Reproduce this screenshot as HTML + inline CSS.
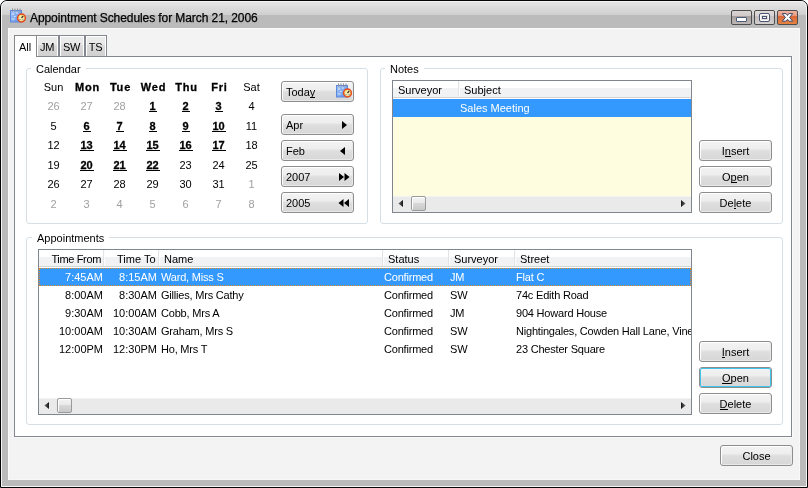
<!DOCTYPE html>
<html><head><meta charset="utf-8">
<style>
.t,.btn,.d,.lbl,.txt{filter:grayscale(1)}
*{margin:0;padding:0;box-sizing:border-box}
html,body{width:808px;height:488px;overflow:hidden;background:#fff}
body{position:relative;font-family:"Liberation Sans",sans-serif;font-size:11px;color:#000}
.a{position:absolute}
.t{position:absolute;white-space:nowrap;line-height:13px;font-size:11px}
#win{left:0;top:0;width:808px;height:488px;border:1px solid #050505;border-radius:7px 7px 0 0;background:linear-gradient(#f6f6f6 0,#f6f6f6 1px,#e6e6e6 1px,#cfcfcf 14px,#bbbbbb 14px,#bbbbbb 100%);overflow:hidden}
#win .hl{left:0;top:0;right:0;bottom:0;border:1px solid #f4f4f4;border-radius:6px 6px 0 0}
#tb{left:1px;top:1px;width:804px;height:13px;background:linear-gradient(#e6e6e6,#cdcdcd)}
#client{left:8px;top:28px;width:792px;height:452px;background:#f3f3f3;border-top:1px solid #fbfbfb;border-left:1px solid #fbfbfb;border-right:1px solid #f8f8f8;border-bottom:1px solid #f8f8f8}
.btn{position:absolute;width:73px;height:21px;border:1px solid #8d8d8d;border-radius:3px;background:linear-gradient(#f3f3f3 0,#eeeeee 40%,#dedede 52%,#d7d7d7 100%);box-shadow:inset 1px 1px 0 #fff, inset -1px -1px 0 #e9e9e9;font-size:11px;line-height:21px;text-align:center}
.btn u{text-decoration:none;position:relative}
.btn u::after{content:"";position:absolute;left:0;right:0;bottom:0px;height:1px;background:#000}
.grp{position:absolute;border:1px solid #d5dfe5;border-radius:3px}
.grp .lbl{position:absolute;top:-8px;background:#fff;padding:0 5px;line-height:13px;white-space:nowrap}
.tab{position:absolute;top:35px;height:22px;border:1px solid #828790;border-bottom:none;background:linear-gradient(#ebebeb 0,#e9e9e9 40%,#dadada 45%,#d0d0d0 100%);box-shadow:inset 1px 1px 0 #fff,inset -1px 0 0 #fff;line-height:22px;text-align:center}
.list{position:absolute;background:#fff;border:1px solid #80858e;overflow:hidden}
.hdr{position:absolute;left:0;top:0;height:17px;right:0;background:linear-gradient(#fff 0,#fff 7px,#f1f2f4 7px,#f1f2f4 100%);border-bottom:1px solid #d5d5d5;box-shadow:0 1px 0 #fff}
.sep{position:absolute;top:0;width:2px;height:16px;background:linear-gradient(to right,#e3e3e5 50%,#fcfcfc 50%)}
.sb{position:absolute;left:0;right:0;bottom:0;height:16px;background:#eaeaea;border-top:1px solid #f3f3f3}
.thumb{position:absolute;top:-1px;width:15px;height:15px;border:1px solid #9a9a9a;border-radius:2px;background:linear-gradient(#f2f2f2 0,#ebebeb 42%,#d8d8d8 50%,#c9c9c9 100%);box-shadow:inset 1px 1px 0 #fff}
.row{position:absolute;left:0;right:0;height:18px}
.sel{background:#3399ff;color:#fff}
.g{color:#a0a0a0}
.d{position:absolute;width:33px;text-align:center;line-height:13px;white-space:nowrap}
.b{font-weight:bold}
.b span{display:inline-block;position:relative}
.b span::after{content:"";position:absolute;left:0;right:-1px;top:11px;height:1px;background:#000}
.hb{font-weight:bold;letter-spacing:0.8px;text-indent:2px;-webkit-text-stroke:0.3px #000}
.b{-webkit-text-stroke:0.3px #000}
</style></head><body>
<div id="win" class="a">
  <div class="a hl"></div>
</div>

<!-- title icon -->
<svg class="a" style="left:10px;top:7px" width="17" height="17" viewBox="0 0 17 17">
  <defs><linearGradient id="pga" x1="0" y1="0" x2="1" y2="1"><stop offset="0" stop-color="#a9c8f6"/><stop offset="1" stop-color="#5d8fe6"/></linearGradient>
  <radialGradient id="cga"><stop offset="0" stop-color="#fbf7d0"/><stop offset="1" stop-color="#f0d870"/></radialGradient></defs>
  <rect x="0.5" y="3.5" width="11" height="11.5" fill="url(#pga)" stroke="#5c88dc" stroke-width="1"/>
  <path d="M2 7 h2 M4 9.5 h1.5 M1.8 12 h3 M6 6 h2" stroke="#eef4ff" stroke-width="1.2" opacity="0.8"/>
  <path d="M2.5 1.5 v3 M5 1.5 v3 M7.5 1.5 v3 M10 1.5 v3" stroke="#8a8f99" stroke-width="1"/>
  <circle cx="11.5" cy="11" r="3.9" fill="url(#cga)" stroke="#e4481c" stroke-width="1.5"/>
  <path d="M11.5 11 L13.2 9" stroke="#403020" stroke-width="1.2"/>
  <circle cx="10" cy="12.5" r="0.6" fill="#4a6ad0"/><circle cx="13" cy="12.8" r="0.6" fill="#4a6ad0"/>
</svg>
<div class="t" style="left:30px;top:11px;font-size:12px;line-height:14px;color:#000;letter-spacing:-0.08px;-webkit-text-stroke:0.25px #000">Appointment Schedules for March 21, 2006</div>

<!-- caption buttons -->
<div class="a" style="left:731px;top:10px;width:21px;height:15px;border:1px solid #4d4d4d;border-radius:2px;background:linear-gradient(#dad5d4 0,#d0cbca 36%,#a39d9c 38%,#bdb8b7 100%)">
  <div class="a" style="left:4px;top:6px;width:11px;height:5px;background:#fff;border:1px solid #4a5a78;border-radius:1px"></div>
</div>
<div class="a" style="left:754px;top:10px;width:21px;height:15px;border:1px solid #4d4d4d;border-radius:2px;background:linear-gradient(#dedad9 0,#d6d2d1 36%,#c4bfbe 38%,#d2cecd 100%)">
  <div class="a" style="left:4px;top:2px;width:11px;height:9px;background:#e2dede;box-shadow:inset 0 0 0 1px #fff;border:1px solid #4a5470;border-radius:2px"><div class="a" style="left:2px;top:2px;width:5px;height:3px;background:#f4f4f4;border:1px solid #4a5470"></div></div>
</div>
<div class="a" style="left:777px;top:10px;width:21px;height:15px;border:1px solid #4d4d4d;border-radius:2px;background:linear-gradient(#f1b5a3 0,#e89a7e 36%,#d8663b 38%,#e7833f 100%)">
  <svg class="a" style="left:3px;top:2px" width="14" height="11" viewBox="0 0 14 11">
    <path d="M1.3 0.6 L5.1 0.6 L6.5 2.5 L7.9 0.6 L11.7 0.6 L8.6 4.4 L11.7 8.2 L7.9 8.2 L6.5 6.3 L5.1 8.2 L1.3 8.2 L4.4 4.4 Z" fill="#fff" stroke="#3b4766" stroke-width="1" stroke-linejoin="round"/>
  </svg>
</div>

<div id="client" class="a"></div>

<!-- tabs -->
<div class="tab" style="left:36px;width:23px;padding-right:1px"><span class="txt" style="display:inline-block;letter-spacing:-0.3px">JM</span></div>
<div class="tab" style="left:59px;width:26px;padding-right:1px"><span class="txt" style="display:inline-block;letter-spacing:-0.3px">SW</span></div>
<div class="tab" style="left:85px;width:22px;padding-right:1px"><span class="txt" style="display:inline-block;letter-spacing:-0.3px">TS</span></div>
<div class="a" style="left:14px;top:56px;width:778px;height:381px;background:#fff;border:1px solid #828790;box-shadow:1px 1px 0 #fafafa"></div>
<div class="a txt" style="left:14px;top:35px;width:23px;height:22px;background:#fff;border:1px solid #828790;border-bottom:none;line-height:20px;padding-left:4px"><span style="position:relative;top:1px">All</span></div>

<!-- Calendar group -->
<div class="grp" style="left:26px;top:68px;width:342px;height:156px">
  <div class="lbl" style="left:4px;top:-6px">Calendar</div>
</div>
<div class="d " style="left:37px;top:81px">Sun</div>
<div class="d hb" style="left:70px;top:81px">Mon</div>
<div class="d hb" style="left:103px;top:81px">Tue</div>
<div class="d hb" style="left:136px;top:81px">Wed</div>
<div class="d hb" style="left:169px;top:81px">Thu</div>
<div class="d hb" style="left:202px;top:81px">Fri</div>
<div class="d " style="left:235px;top:81px">Sat</div>
<div class="d g" style="left:37px;top:100px">26</div>
<div class="d g" style="left:70px;top:100px">27</div>
<div class="d g" style="left:103px;top:100px">28</div>
<div class="d b" style="left:136px;top:100px"><span>1</span></div>
<div class="d b" style="left:169px;top:100px"><span>2</span></div>
<div class="d b" style="left:202px;top:100px"><span>3</span></div>
<div class="d " style="left:235px;top:100px">4</div>
<div class="d " style="left:37px;top:120px">5</div>
<div class="d b" style="left:70px;top:120px"><span>6</span></div>
<div class="d b" style="left:103px;top:120px"><span>7</span></div>
<div class="d b" style="left:136px;top:120px"><span>8</span></div>
<div class="d b" style="left:169px;top:120px"><span>9</span></div>
<div class="d b" style="left:202px;top:120px"><span>10</span></div>
<div class="d " style="left:235px;top:120px">11</div>
<div class="d " style="left:37px;top:139px">12</div>
<div class="d b" style="left:70px;top:139px"><span>13</span></div>
<div class="d b" style="left:103px;top:139px"><span>14</span></div>
<div class="d b" style="left:136px;top:139px"><span>15</span></div>
<div class="d b" style="left:169px;top:139px"><span>16</span></div>
<div class="d b" style="left:202px;top:139px"><span>17</span></div>
<div class="d " style="left:235px;top:139px">18</div>
<div class="d " style="left:37px;top:159px">19</div>
<div class="d b" style="left:70px;top:159px"><span>20</span></div>
<div class="d b" style="left:103px;top:159px"><span>21</span></div>
<div class="d b" style="left:136px;top:159px"><span>22</span></div>
<div class="d " style="left:169px;top:159px">23</div>
<div class="d " style="left:202px;top:159px">24</div>
<div class="d " style="left:235px;top:159px">25</div>
<div class="d " style="left:37px;top:178px">26</div>
<div class="d " style="left:70px;top:178px">27</div>
<div class="d " style="left:103px;top:178px">28</div>
<div class="d " style="left:136px;top:178px">29</div>
<div class="d " style="left:169px;top:178px">30</div>
<div class="d " style="left:202px;top:178px">31</div>
<div class="d g" style="left:235px;top:178px">1</div>
<div class="d g" style="left:37px;top:198px">2</div>
<div class="d g" style="left:70px;top:198px">3</div>
<div class="d g" style="left:103px;top:198px">4</div>
<div class="d g" style="left:136px;top:198px">5</div>
<div class="d g" style="left:169px;top:198px">6</div>
<div class="d g" style="left:202px;top:198px">7</div>
<div class="d g" style="left:235px;top:198px">8</div>

<!-- Notes group -->
<div class="grp" style="left:380px;top:68px;width:403px;height:156px">
  <div class="lbl" style="left:4px;top:-6px">Notes</div>
</div>

<!-- Appointments group -->
<div class="grp" style="left:26px;top:237px;width:757px;height:188px">
  <div class="lbl" style="left:5px;top:-6px">Appointments</div>
</div>

<!-- calendar buttons -->
<div class="btn" style="left:281px;top:81px;text-align:left;padding-left:4px">Toda<u>y</u>
  </div>
<svg class="a" style="left:336px;top:82px" width="17" height="17" viewBox="0 0 17 17">
  <defs><linearGradient id="pgb" x1="0" y1="0" x2="1" y2="1"><stop offset="0" stop-color="#a9c8f6"/><stop offset="1" stop-color="#5d8fe6"/></linearGradient>
  <radialGradient id="cgb"><stop offset="0" stop-color="#fbf7d0"/><stop offset="1" stop-color="#f0d870"/></radialGradient></defs>
  <rect x="0.5" y="3.5" width="11" height="11.5" fill="url(#pgb)" stroke="#5c88dc" stroke-width="1"/>
  <path d="M2 7 h2 M4 9.5 h1.5 M1.8 12 h3 M6 6 h2" stroke="#eef4ff" stroke-width="1.2" opacity="0.8"/>
  <path d="M2.5 1.5 v3 M5 1.5 v3 M7.5 1.5 v3 M10 1.5 v3" stroke="#8a8f99" stroke-width="1"/>
  <circle cx="11.5" cy="11" r="3.9" fill="url(#cgb)" stroke="#e4481c" stroke-width="1.5"/>
  <path d="M11.5 11 L13.2 9" stroke="#403020" stroke-width="1.2"/>
  <circle cx="10" cy="12.5" r="0.6" fill="#4a6ad0"/><circle cx="13" cy="12.8" r="0.6" fill="#4a6ad0"/>
</svg>
<div style="display:none">
</div>
<div class="btn" style="left:281px;top:114px;text-align:left;padding-left:4px">Apr
  <svg class="a" style="left:60px;top:6px" width="6" height="8"><path d="M0 0 L5 4 L0 8 Z" fill="#000"/></svg></div>
<div class="btn" style="left:281px;top:140px;text-align:left;padding-left:4px">Feb
  <svg class="a" style="left:58px;top:6px" width="6" height="8"><path d="M5 0 L0 4 L5 8 Z" fill="#000"/></svg></div>
<div class="btn" style="left:281px;top:166px;text-align:left;padding-left:4px">2007
  <svg class="a" style="left:57px;top:6px" width="13" height="8"><path d="M0 0 L5 4 L0 8 Z M5.5 0 L10.5 4 L5.5 8 Z" fill="#000"/></svg></div>
<div class="btn" style="left:281px;top:192px;text-align:left;padding-left:4px">2005
  <svg class="a" style="left:56px;top:6px" width="13" height="8"><path d="M5.5 0 L0.5 4 L5.5 8 Z M11 0 L6 4 L11 8 Z" fill="#000"/></svg></div>

<!-- notes buttons -->
<div class="btn" style="left:699px;top:140px">I<u>n</u>sert</div>
<div class="btn" style="left:699px;top:166px">O<u>p</u>en</div>
<div class="btn" style="left:699px;top:192px">De<u>l</u>ete</div>

<!-- appt buttons -->
<div class="btn" style="left:699px;top:341px"><u>I</u>nsert</div>
<div class="btn" style="left:699px;top:367px"><u>O</u>pen</div>
<div class="a" style="left:700px;top:368px;width:71px;height:19px;border:1px solid #3fc3ef;border-radius:2px"></div>
<div class="btn" style="left:699px;top:393px"><u>D</u>elete</div>

<div class="btn" style="left:720px;top:445px">Close</div>

<!-- notes list -->
<div class="list" style="left:392px;top:80px;width:300px;height:133px;background:#fffde0">
  <div class="hdr"></div>
  <div class="sep" style="left:65px"></div>
  <div class="t" style="left:5px;top:3px">Surveyor</div>
  <div class="t" style="left:71px;top:3px">Subject</div>
  <div class="row sel" style="top:18px"><div class="t" style="left:67px;top:3px">Sales Meeting</div></div>
  <div class="sb">
    <svg class="a" style="left:5px;top:3px" width="6" height="8"><defs><linearGradient id="al"><stop offset="0" stop-color="#777"/><stop offset="1" stop-color="#111"/></linearGradient></defs><path d="M5 0 L0.3 3.5 L5 7 Z" fill="url(#al)"/></svg>
    <div class="thumb" style="left:18px"></div>
    <svg class="a" style="left:288px;top:3px" width="6" height="8"><defs><linearGradient id="ar"><stop offset="0" stop-color="#111"/><stop offset="1" stop-color="#777"/></linearGradient></defs><path d="M0 0 L4.7 3.5 L0 7 Z" fill="url(#ar)"/></svg>
  </div>
</div>

<!-- appointments list -->
<div class="list" style="left:38px;top:249px;width:654px;height:166px">
  <div class="hdr"></div>
  <div class="sep" style="left:64px"></div>
  <div class="sep" style="left:119px"></div>
  <div class="sep" style="left:343px"></div>
  <div class="sep" style="left:409px"></div>
  <div class="sep" style="left:475px"></div>
  <div class="t" style="left:0;width:62px;text-align:right;top:3px;letter-spacing:-0.35px">Time From</div>
  <div class="t" style="left:78px;top:3px">Time To</div>
  <div class="t" style="left:125px;top:3px">Name</div>
  <div class="t" style="left:349px;top:3px">Status</div>
  <div class="t" style="left:415px;top:3px">Surveyor</div>
  <div class="t" style="left:481px;top:3px">Street</div>
  <div class="row sel" style="top:18px;outline:1px dotted #e08a2a;outline-offset:-1px"></div>
  <div class="row" style="top:18px;color:#fff"><div class="t" style="left:0;width:64px;text-align:right;top:3px">7:45AM</div><div class="t" style="left:64px;width:54px;text-align:right;top:3px">8:15AM</div><div class="t" style="left:122px;top:3px;letter-spacing:-0.2px">Ward, Miss S</div><div class="t" style="left:345px;top:3px;letter-spacing:-0.2px">Confirmed</div><div class="t" style="left:411px;top:3px;letter-spacing:-0.2px">JM</div><div class="t" style="left:477px;top:3px;letter-spacing:-0.2px">Flat C</div></div>
<div class="row" style="top:36px"><div class="t" style="left:0;width:64px;text-align:right;top:3px">8:00AM</div><div class="t" style="left:64px;width:54px;text-align:right;top:3px">8:30AM</div><div class="t" style="left:122px;top:3px;letter-spacing:-0.2px">Gillies, Mrs Cathy</div><div class="t" style="left:345px;top:3px;letter-spacing:-0.2px">Confirmed</div><div class="t" style="left:411px;top:3px;letter-spacing:-0.2px">SW</div><div class="t" style="left:477px;top:3px;letter-spacing:-0.2px">74c Edith Road</div></div>
<div class="row" style="top:54px"><div class="t" style="left:0;width:64px;text-align:right;top:3px">9:30AM</div><div class="t" style="left:64px;width:54px;text-align:right;top:3px">10:00AM</div><div class="t" style="left:122px;top:3px;letter-spacing:-0.2px">Cobb, Mrs A</div><div class="t" style="left:345px;top:3px;letter-spacing:-0.2px">Confirmed</div><div class="t" style="left:411px;top:3px;letter-spacing:-0.2px">JM</div><div class="t" style="left:477px;top:3px;letter-spacing:-0.2px">904 Howard House</div></div>
<div class="row" style="top:72px"><div class="t" style="left:0;width:64px;text-align:right;top:3px">10:00AM</div><div class="t" style="left:64px;width:54px;text-align:right;top:3px">10:30AM</div><div class="t" style="left:122px;top:3px;letter-spacing:-0.2px">Graham, Mrs S</div><div class="t" style="left:345px;top:3px;letter-spacing:-0.2px">Confirmed</div><div class="t" style="left:411px;top:3px;letter-spacing:-0.2px">SW</div><div class="t" style="left:477px;top:3px;letter-spacing:-0.2px">Nightingales, Cowden Hall Lane, Vine</div></div>
<div class="row" style="top:90px"><div class="t" style="left:0;width:64px;text-align:right;top:3px">12:00PM</div><div class="t" style="left:64px;width:54px;text-align:right;top:3px">12:30PM</div><div class="t" style="left:122px;top:3px;letter-spacing:-0.2px">Ho, Mrs T</div><div class="t" style="left:345px;top:3px;letter-spacing:-0.2px">Confirmed</div><div class="t" style="left:411px;top:3px;letter-spacing:-0.2px">SW</div><div class="t" style="left:477px;top:3px;letter-spacing:-0.2px">23 Chester Square</div></div>
  <div class="sb">
    <svg class="a" style="left:5px;top:3px" width="6" height="8"><defs><linearGradient id="al"><stop offset="0" stop-color="#777"/><stop offset="1" stop-color="#111"/></linearGradient></defs><path d="M5 0 L0.3 3.5 L5 7 Z" fill="url(#al)"/></svg>
    <div class="thumb" style="left:18px"></div>
    <svg class="a" style="left:642px;top:3px" width="6" height="8"><path d="M0 0 L4.7 3.5 L0 7 Z" fill="url(#ar)"/></svg>
  </div>
</div>
</body></html>
